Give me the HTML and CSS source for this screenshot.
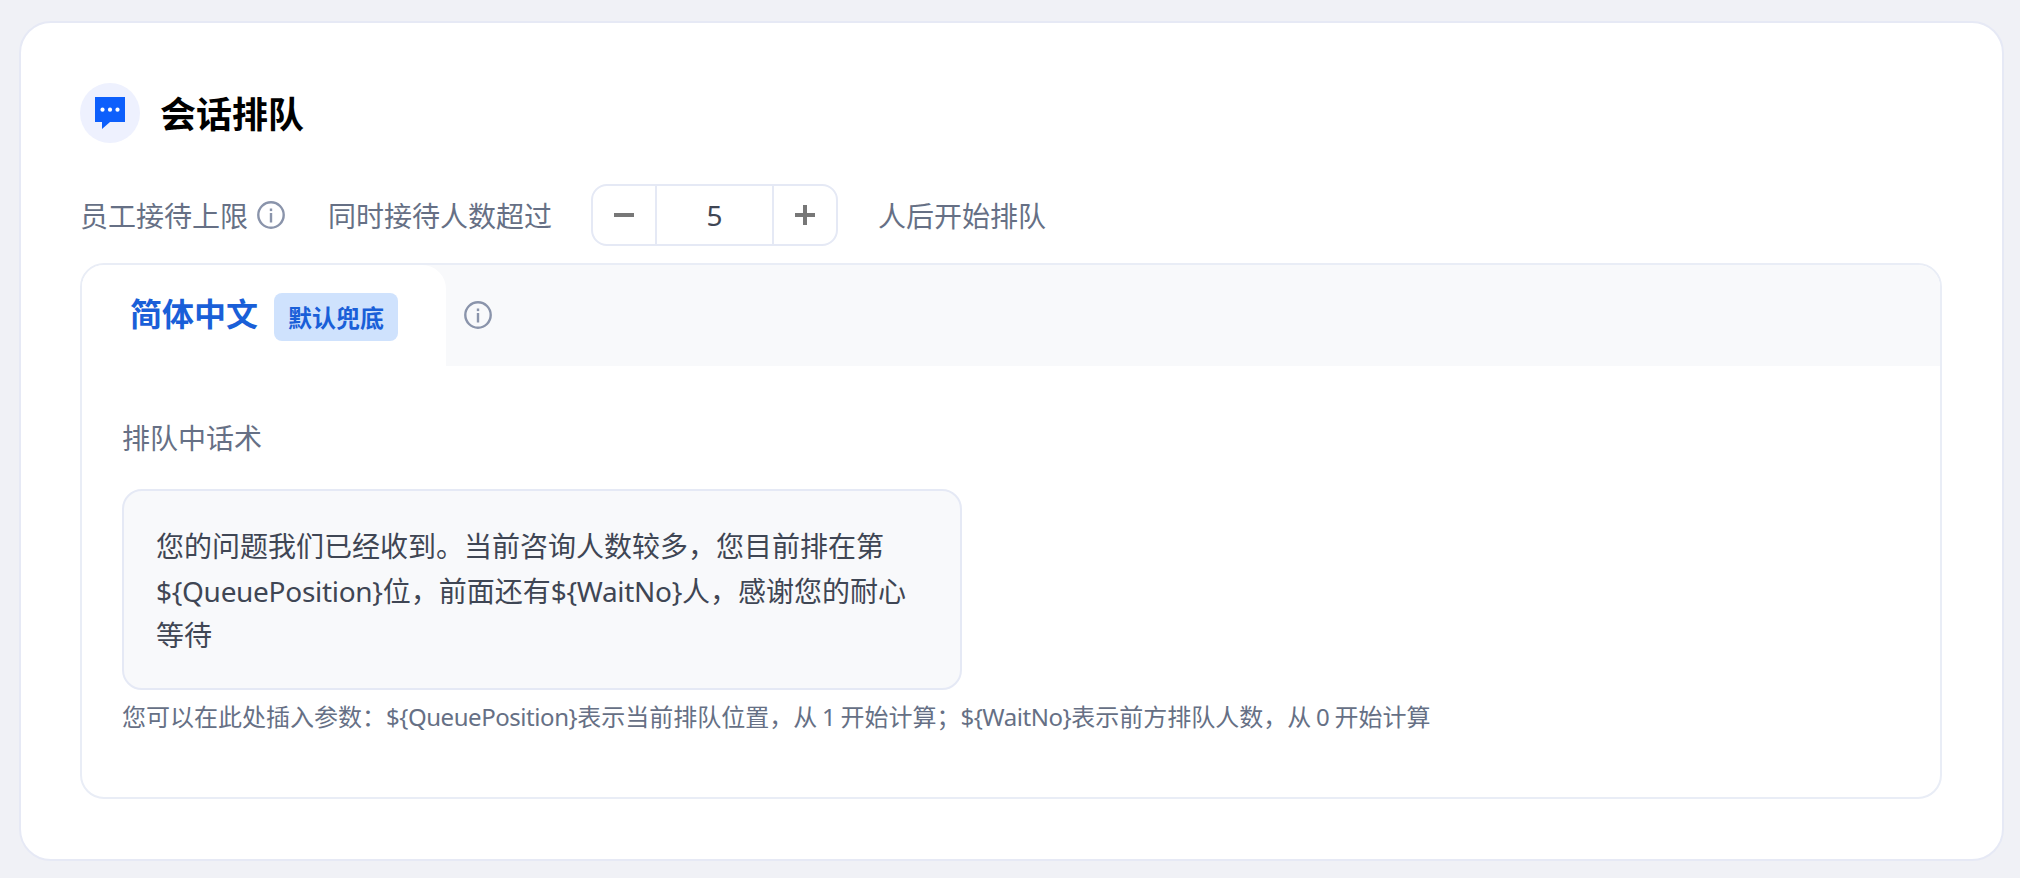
FILE: index.html
```html
<!DOCTYPE html>
<html lang="zh-CN">
<head>
<meta charset="utf-8">
<title>会话排队</title>
<link rel="stylesheet" href="styles.css">
</head>
<body>
<section class="card">
  <header class="head">
    <span class="head-icon">
      <svg width="30" height="32" viewBox="0 0 30 32"><path fill="#0d5ffc" d="M0 0H30V25H15L7 32V25H0Z"/><circle cx="7.5" cy="12.7" r="2.1" fill="#fff"/><circle cx="15" cy="12.7" r="2.1" fill="#fff"/><circle cx="22.5" cy="12.7" r="2.1" fill="#fff"/></svg>
    </span>
    <h1 class="title">会话排队</h1>
  </header>
  <div class="limit">
    <span class="limit-label">员工接待上限</span>
    <svg class="info" viewBox="0 0 28 28"><circle cx="14" cy="14" r="12.7" fill="none" stroke="currentColor" stroke-width="2.4"/><rect x="12.8" y="12" width="2.4" height="9.5" fill="currentColor"/><rect x="12.8" y="7.5" width="2.4" height="2.6" fill="currentColor"/></svg>
    <span class="limit-text">同时接待人数超过</span>
    <div class="stepper">
      <span class="step"><svg width="20" height="20" viewBox="0 0 20 20"><rect y="8" width="20" height="4" fill="#777"/></svg></span>
      <span class="step-value">5</span>
      <span class="step"><svg width="20" height="20" viewBox="0 0 20 20"><rect y="8" width="20" height="4" fill="#777"/><rect x="8" width="4" height="20" fill="#777"/></svg></span>
    </div>
    <span class="limit-after">人后开始排队</span>
  </div>
  <div class="panel">
    <div class="tabs">
      <div class="tab">
        <span class="tab-name">简体中文</span>
        <span class="badge">默认兜底</span>
      </div>
      <svg class="info tab-info" viewBox="0 0 28 28"><circle cx="14" cy="14" r="12.7" fill="none" stroke="currentColor" stroke-width="2.4"/><rect x="12.8" y="12" width="2.4" height="9.5" fill="currentColor"/><rect x="12.8" y="7.5" width="2.4" height="2.6" fill="currentColor"/></svg>
    </div>
    <div class="panel-body">
      <div class="field-label">排队中话术</div>
      <div class="message">您的问题我们已经收到。当前咨询人数较多，您目前排在第<br><span class="var">${QueuePosition}</span>位，前面还有<span class="var">${WaitNo}</span>人，感谢您的耐心<br>等待</div>
      <p class="hint">您可以在此处插入参数：<span class="var">${QueuePosition}</span>表示当前排队位置，从 1 开始计算；<span class="var">${WaitNo}</span>表示前方排队人数，从 0 开始计算</p>
    </div>
  </div>
</section>
</body>
</html>
```

FILE: styles.css
```css
* { box-sizing: border-box; }
html, body { height: 100%; }
body {
  margin: 0;
  padding: 21px 16px 17px 19px;
  background: #f0f1f6;
  font-family: "Noto Sans", "Noto Sans CJK SC", sans-serif;
  color: #667085;
  overflow: hidden;
}
.card {
  width: 1985px;
  height: 840px;
  padding: 60px 60px 60px 59px;
  background: #fff;
  border: 2px solid #e6e9f5;
  border-radius: 32px;
}
.head { display: flex; align-items: center; gap: 20px; height: 60px; }
.head-icon {
  width: 60px; height: 60px;
  border-radius: 50%;
  background: #eef1fe;
  display: flex; align-items: center; justify-content: center;
}
.title { margin: 3px 0 0; font-size: 36px; line-height: 48px; font-weight: 700; color: #000; }
.limit { display: flex; align-items: center; height: 62px; margin-top: 41px; font-size: 28px; }
.info { width: 28px; height: 28px; color: #8a94ab; flex: none; }
.limit .info { margin-left: 9px; }
.limit-text { margin-left: 43px; }
.stepper {
  display: flex;
  width: 247px; height: 62px;
  margin-left: 39px;
  border: 2px solid #e5e9f5;
  border-radius: 16px;
}
.step { width: 62px; display: flex; align-items: center; justify-content: center; flex: none; }
.step-value {
  flex: 1;
  display: flex; align-items: center; justify-content: center;
  border-left: 2px solid #e5e9f5;
  border-right: 2px solid #e5e9f5;
  color: #3f4654;
  font-size: 28px;
}
.limit-after { margin-left: 40px; }
.panel {
  margin-top: 17px;
  height: 536px;
  border: 2px solid #e9edf6;
  border-radius: 24px;
  overflow: hidden;
}
.tabs { display: flex; align-items: center; height: 101px; background: #f8f9fb; }
.tab {
  display: flex; align-items: center;
  width: 364px; height: 101px;
  padding-left: 48px;
  background: #fff;
  border-radius: 0 24px 0 0;
}
.tab-name { font-size: 32px; font-weight: 700; color: #1a5fd8; line-height: 44px; margin-top: -3px; }
.badge {
  margin: 3px 0 0 16px;
  width: 124px; height: 48px;
  display: flex; align-items: center; justify-content: center;
  padding-bottom: 2px;
  background: #cfe2fd;
  border-radius: 8px;
  color: #1a5fd8;
  font-size: 24px;
  font-weight: 700;
}
.tab-info { margin-left: 18px; margin-top: -2px; }
.panel-body { padding: 52px 40px 0; }
.field-label { font-size: 28px; line-height: 40px; }
.message {
  margin-top: 31px;
  width: 840px; height: 201px;
  padding: 33px 32px 0;
  background: #f8f9fb;
  border: 2px solid #e5e9f5;
  border-radius: 20px;
  color: #3f4654;
  font-size: 28px;
  line-height: 44.5px;
}
.message .var { letter-spacing: -0.3px; }
.hint .var { letter-spacing: -0.45px; }
.hint { margin: 9px 0 0; font-size: 24px; line-height: 36px; word-spacing: -1.5px; }
```
